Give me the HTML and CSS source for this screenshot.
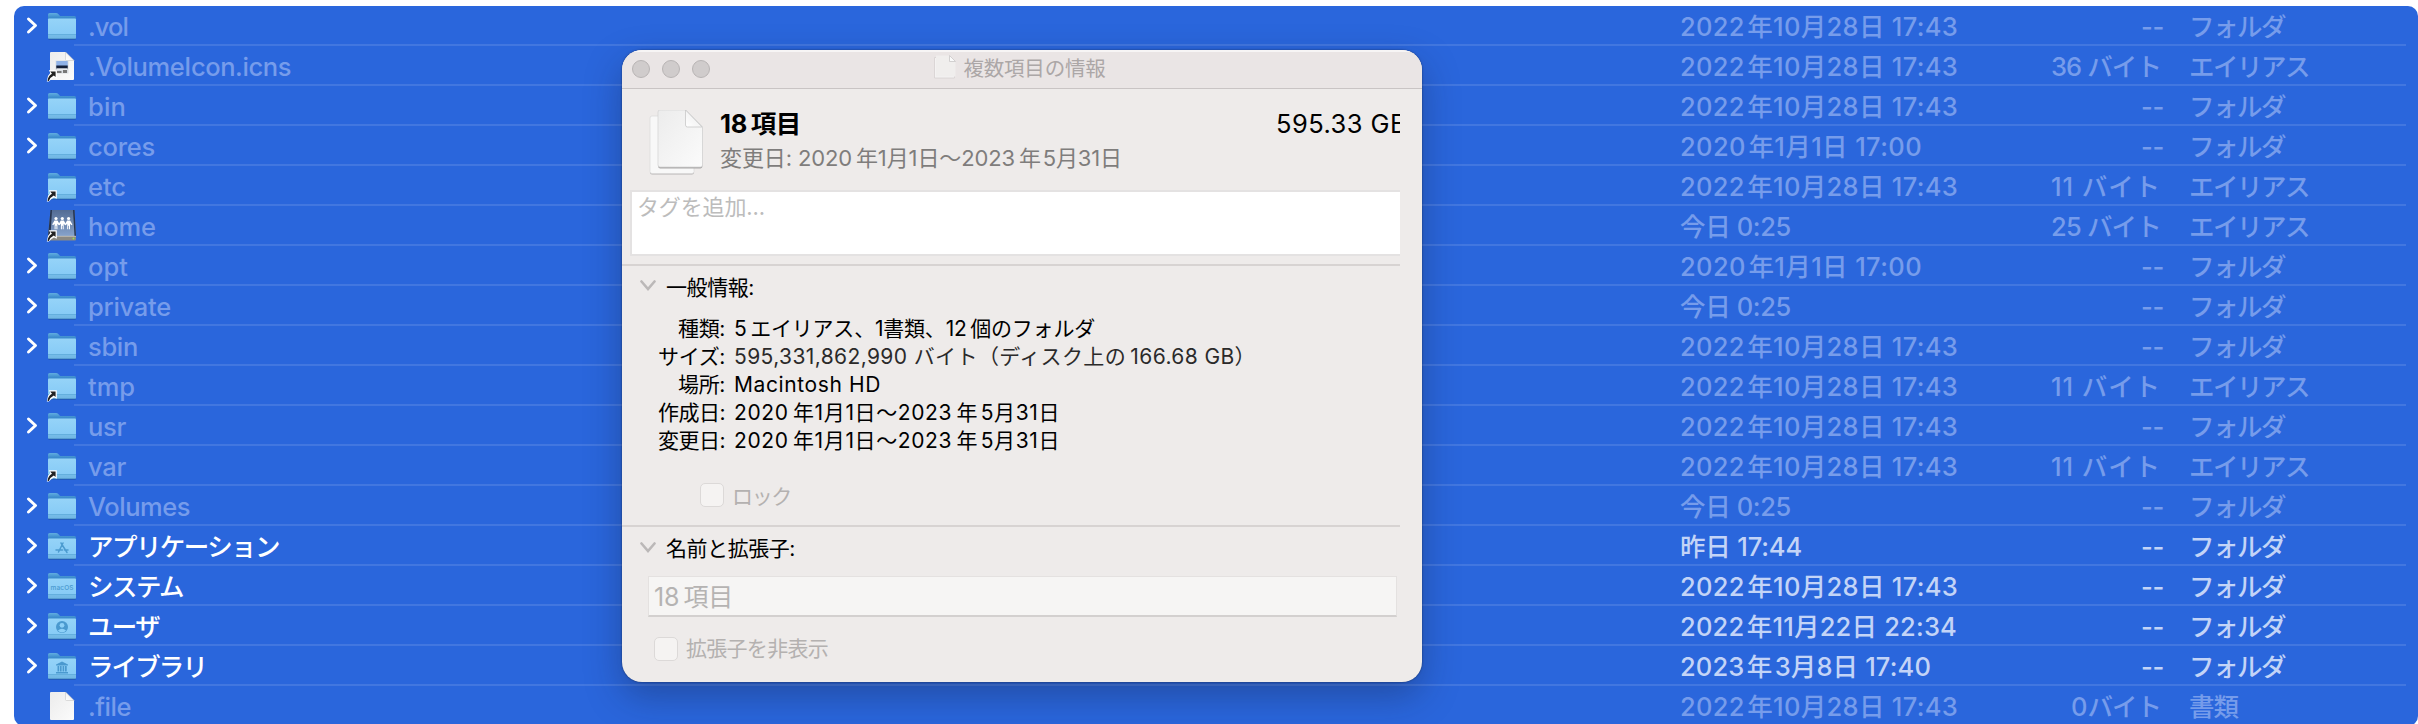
FILE: index.html
```html
<!DOCTYPE html>
<html lang="ja">
<head>
<meta charset="utf-8">
<title>複数項目の情報</title>
<link rel="stylesheet" href="styles.css">
</head>
<body>
<svg class="defs" width="0" height="0">
  <defs>
    <linearGradient id="gBack" x1="0" y1="0" x2="0" y2="1"><stop offset="0" stop-color="#62ade0"/><stop offset=".25" stop-color="#3d8ccd"/><stop offset="1" stop-color="#3d8ccd"/></linearGradient>
    <linearGradient id="gFront" x1="0" y1="0" x2="0" y2="1"><stop offset="0" stop-color="#95d3f8"/><stop offset=".78" stop-color="#87cbf6"/><stop offset=".8" stop-color="#76bce8"/><stop offset="1" stop-color="#70b6e3"/></linearGradient>
    <linearGradient id="gDoc" x1="0" y1="0" x2="1" y2="1"><stop offset="0" stop-color="#ececec"/><stop offset="1" stop-color="#fbfbfb"/></linearGradient>
    <linearGradient id="gFold" x1="0" y1="1" x2="1" y2="0"><stop offset="0" stop-color="#fff"/><stop offset=".5" stop-color="#f4f4f4"/><stop offset="1" stop-color="#d4d4d4"/></linearGradient>
    <linearGradient id="gDrive" x1="0" y1="0" x2="0" y2="1"><stop offset="0" stop-color="#536c94"/><stop offset="1" stop-color="#86a2cb"/></linearGradient>
    <symbol id="folder" viewBox="0 0 32 32">
      <rect x="2.2" y="9" width="27.8" height="21" rx="1.6" fill="#174a9f" opacity=".55"/>
      <path d="M2 4.6Q2 3 3.6 3H10q1.300 0 2.300 1l1.300 1.400q.6.600 1.600.600H28.400Q30 6 30 7.600V20H2z" fill="url(#gBack)"/>
      <path d="M2 9.600Q2 8.600 3 8.600H29q1 0 1 1V27.500Q30 29 28.500 29H3.500Q2 29 2 27.500z" fill="url(#gFront)"/>
      <path d="M2 24.500H30" stroke="#5ca7d8" stroke-width=".8"/>
      <path d="M2.800 28.600H29.200" stroke="#4f94c6" stroke-width=".8"/>
    </symbol>
    <symbol id="alias" viewBox="0 0 32 32">
      <path d="M.8 31.600 2 26 4.400 22.800 2.800 20.200H10.800V28.800L8 27.400 5.500 29 2.800 31.600z" fill="#fff"/>
      <path d="M1.600 31Q1.800 26.200 6 23.800L4.200 21.400H9.600V27L7.800 25.600Q3.800 27.600 2.800 31z" fill="#222"/>
    </symbol>
    <symbol id="doc" viewBox="0 0 32 32">
      <path d="M4 3Q4 2 5 2H19.500L28 10.500V29Q28 30 27 30H5Q4 30 4 29z" fill="url(#gDoc)"/>
      <path d="M19.500 2V9.500Q19.500 10.500 20.500 10.500H28z" fill="url(#gFold)" stroke="#bdbdbd" stroke-width=".5"/>
    </symbol>
  </defs>
</svg>

<main class="list" id="list"></main>

<section class="dialog">
  <header class="titlebar">
    <div class="lights"><i></i><i></i><i></i></div>
    <div class="title">
      <svg width="26" height="26" viewBox="0 0 26 26"><path d="M2.500 3.500H17L22.500 10V24H2.500z" fill="#f4f2f2" stroke="#d5d1d1" stroke-width=".8"/><path d="M4 1.500H17.500L23.500 7.500V22.500H4z" fill="#f0eeed"/><path d="M17.500 1.500V7.500H23.500z" fill="#fafafa" stroke="#c9c6c6" stroke-width=".8"/></svg>
      <span class="t" data-w="142">複数項目の情報</span>
    </div>
  </header>
  <div class="content">
    <div class="summary">
      <svg class="docs" width="58" height="68" viewBox="0 0 58 68">
        <path d="M3 9Q3 7 5 7H30L47 24V62.500Q47 64.500 45 64.500H5Q3 64.500 3 62.500z" fill="#b5b3b3"/>
        <path d="M3 8Q3 6 5 6H30L47 23V61.500Q47 63.500 45 63.500H5Q3 63.500 3 61.500z" fill="#f8f8f8" stroke="#dadada" stroke-width=".7"/>
        <path d="M11 3Q11 1 13 1H39L55.500 17.500V56Q55.500 58.400 53.500 58.400H13Q11 58.400 11 56z" fill="#aaa8a8"/>
        <path d="M11 2Q11 0 13 0H39L55.500 16.500V55Q55.500 57 53.500 57H13Q11 57 11 55z" fill="url(#gDoc)" stroke="#d2d2d2" stroke-width=".7"/>
        <path d="M38.500 0V15Q38.500 17 40.500 17H55z" fill="url(#gFold)" stroke="#c8c8c8" stroke-width=".8"/>
      </svg>
      <div class="heads">
        <div class="head"><b class="t" data-w="81">18&#x2009;項目</b><span class="total"><span class="t" data-w="131">595.33 GB</span></span></div>
        <div class="sub"><span class="t" data-w="402">変更日: 2020&#x2009;年1月1日〜2023&#x2009;年&#x200A;5月31日</span></div>
      </div>
    </div>
    <div class="tags"><span class="t" data-w="128">タグを追加...</span></div>
    <div class="section first">
      <svg class="disc" width="16" height="11" viewBox="0 0 16 11"><path d="M1.500 1.500 8 9 14.500 1.500" /></svg>
      <span class="t" data-w="88">一般情報:</span>
    </div>
    <div class="info">
      <span class="k"><span class="t" data-w="47">種類:</span></span><span><span class="t" data-w="361">5&#x2009;エイリアス、1書類、12&#x2009;個のフォルダ</span></span>
      <span class="k"><span class="t" data-w="67">サイズ:</span></span><span class="soft"><span class="t" data-w="522">595,331,862,990 バイト（ディスク上の&#x2009;166.68 GB）</span></span>
      <span class="k"><span class="t" data-w="47">場所:</span></span><span><span class="t" data-w="147">Macintosh HD</span></span>
      <span class="k"><span class="t" data-w="67">作成日:</span></span><span><span class="t" data-w="326">2020&#x2009;年1月1日〜2023&#x2009;年&#x200A;5月31日</span></span>
      <span class="k"><span class="t" data-w="67">変更日:</span></span><span><span class="t" data-w="326">2020&#x2009;年1月1日〜2023&#x2009;年&#x200A;5月31日</span></span>
    </div>
    <div class="check lock"><i></i><span class="t" data-w="59">ロック</span></div>
    <div class="section second">
      <svg class="disc" width="16" height="11" viewBox="0 0 16 11"><path d="M1.500 1.500 8 9 14.500 1.500" /></svg>
      <span class="t" data-w="129">名前と拡張子:</span>
    </div>
    <div class="field"><span class="t" data-w="79">18&#x2009;項目</span></div>
    <div class="check hide"><i></i><span class="t" data-w="142">拡張子を非表示</span></div>
  </div>
</section>
<script src="list.js"></script>
</body>
</html>
```

FILE: styles.css
```css
* { box-sizing: border-box; }
body {
  margin: 0;
  width: 2418px;
  height: 724px;
  overflow: hidden;
  background: #fff;
  font-family: Inter, "Noto Sans CJK JP", sans-serif;
  position: relative;
}
.defs { position: absolute; }
.t { display: inline-block; white-space: pre; }

.list {
  margin: 6px 0 0 14px;
  width: 2404px;
  height: 720px;
  border-radius: 10px;
  background: #2a66dc;
  overflow: hidden;
  font-size: 25.500px;
  font-weight: 450;
}
.row {
  height: 40px;
  display: grid;
  grid-template-columns: 12px 20px 42px 1591px 310px 188px 1fr;
  align-items: center;
  color: #769ceb;
  line-height: 41px;
  background: linear-gradient(#4277e0, #4277e0) 60px 100% / 2332px 2px no-repeat;
}
.row:last-child { background: none; }
.row > * { height: 40px; white-space: nowrap; }
.row .arrow { grid-column: 2; }
.row .icon { grid-column: 3; padding: 4px 0 0 0; }
.row .icon svg { display: block; }
.row .date { padding-left: 1px; }
.row .size { text-align: right; }
.row .kind { padding-left: 12px; }
.row.bright { color: #c3d4f7; }
.row.bright .name { color: #fff; }
.arrow svg { display: block; margin-top: 10px; }
.arrow path { fill: none; stroke: #fff; stroke-width: 3; stroke-linecap: round; stroke-linejoin: round; }

.dialog {
  position: absolute;
  left: 622px;
  top: 50px;
  width: 800px;
  height: 632px;
  border-radius: 20px;
  background: #eeebea;
  overflow: hidden;
  box-shadow: 0 0 2px rgba(0,0,0,.5), 0 14px 36px rgba(20,30,60,.34);
}
.titlebar {
  height: 39px;
  background: #eae5e5;
  border-top: 2px solid #f7f5f5;
  border-bottom: 1px solid #c9c4c4;
  display: grid;
  grid-template-columns: 1fr auto 1fr;
  color: #aca7a7;
  font-size: 20.500px;
}
.lights { display: flex; gap: 12px; padding: 8px 0 0 10px; }
.lights i { width: 18px; height: 18px; border-radius: 50%; background: #d0cccc; border: 1px solid #b8b4b4; }
.title { display: flex; gap: 6px; line-height: 33px; padding-right: 7px; }
.title svg { margin-top: 2px; }
.content { width: 778px; overflow: hidden; color: #000; font-size: 21px; }
.summary { display: flex; height: 101px; padding: 21px 0 0 25px; }
.heads { margin-left: 15px; flex: 1; }
.head { display: flex; justify-content: space-between; height: 34px; line-height: 27px; font-size: 25.500px; }
.total { width: 124px; overflow: hidden; white-space: nowrap; height: 30px; }
.sub { color: #7f7d7c; font-size: 22px; line-height: 28px; }
.tags {
  height: 66px;
  margin-left: 8px;
  border: 2px solid #e4e2e2;
  border-right: 0;
  background: #fff;
  color: #bcbcbc;
  font-size: 22px;
  line-height: 30px;
  padding-left: 5px;
}
.section { border-top: 2px solid #d7d3d2; display: flex; align-items: center; gap: 10px; padding-left: 18px; }
.section.first { margin-top: 8px; height: 41px; }
.disc { fill: none; stroke: #bbb8b8; stroke-width: 2.600; stroke-linecap: round; }
.info {
  display: grid;
  grid-template-columns: 103px 1fr;
  column-gap: 9px;
  grid-auto-rows: 28px;
  line-height: 28px;
  margin-top: 10px;
}
.info .k { text-align: right; }
.info > span { white-space: nowrap; }
.info .soft { color: #2b2a2a; }
.check { display: flex; align-items: center; height: 24px; color: #b4b1b0; gap: 8px; }
.check i { width: 24px; height: 24px; border-radius: 5px; border: 1px solid #dcd9d8; background: #f5f3f2; }
.lock { margin: 28px 0 0 78px; }
.section.second { margin-top: 18px; height: 42px; }
.field {
  margin: 9px 3px 0 26px;
  height: 41px;
  background: #f6f5f4;
  border: 1px solid #e4e1e0;
  border-bottom: 2px solid #d3d0cf;
  color: #b5b3b2;
  font-size: 25px;
  line-height: 40px;
  padding-left: 5px;
}
.hide { margin: 20px 0 0 32px; overflow: visible; line-height: 32px; }
```

FILE: list.js
```js
// name, width of name, arrow, icon kind, date, date width, size, size width, kind, kind width, bright
const D = "2022\u200A年10月28日 17:43";
const F = ["--", 23, "フォルダ", 96];
const A = (s) => [s, 110, "エイリアス", 120];
const rows = [
  [".vol", 40, 1, "", D, 278, ...F],
  [".VolumeIcon.icns", 203, 0, "icns", D, 278, ...A("36 バイト")],
  ["bin", 38, 1, "", D, 278, ...F],
  ["cores", 67, 1, "", "2020\u200A年1月1日 17:00", 242, ...F],
  ["etc", 38, 0, "link", D, 278, ...A("11 バイト")],
  ["home", 68, 0, "home", "今日 0:25", 111, ...A("25 バイト")],
  ["opt", 40, 1, "", "2020\u200A年1月1日 17:00", 242, ...F],
  ["private", 83, 1, "", "今日 0:25", 111, ...F],
  ["sbin", 50, 1, "", D, 278, ...F],
  ["tmp", 47, 0, "link", D, 278, ...A("11 バイト")],
  ["usr", 38, 1, "", D, 278, ...F],
  ["var", 38, 0, "link", D, 278, ...A("11 バイト")],
  ["Volumes", 102, 1, "", "今日 0:25", 111, ...F],
  ["アプリケーション", 191, 1, "apps", "昨日 17:44", 122, ...F, 1],
  ["システム", 95, 1, "mac", D, 278, ...F, 1],
  ["ユーザ", 71, 1, "user", "2022\u200A年11月22日 22:34", 277, ...F, 1],
  ["ライブラリ", 118, 1, "lib", "2023\u200A年\u200A3月8日 17:40", 251, ...F, 1],
  [".file", 43, 0, "doc", D, 278, "0\u200Aバイト", 90, "書類", 49],
];
const use = (id) => `<use href="#${id}" width="32" height="32"/>`;
const person = (x) => `<circle cx="${x}" cy="8.500" r="1.600"/><path d="M${x - 1.500} 10.500h3l2.300 4-.9.800-1.500-1.600v5.500h-1v-3.500h-.8v3.500h-1v-5.500l-1.500 1.600-.9-.8z"/>`;
const icons = {
  "": use("folder"),
  link: use("folder") + use("alias"),
  doc: use("doc"),
  icns: use("doc") +
    '<rect x="9.500" y="10.500" width="13" height="13" fill="#d9dde2"/><rect x="10.300" y="11" width="11.400" height="6" fill="#8fb2e8"/><rect x="10.300" y="15.500" width="11.400" height="3" fill="#14203a"/><path d="M11 21h4.500v2H11zM17 20h4v3h-4z" fill="#777"/><path d="M11 19h10" stroke="#fff" stroke-width=".8"/>' + use("alias"),
  home: '<path d="M4.500 0H28.500L30 26H2z" fill="url(#gDrive)"/><path d="M4.500 0 2 26H4.500L6 0zM28.500 0 30 26H28.500L27 0z" fill="#26344f"/><path d="M2 26H30V29.500Q30 30.500 29 30.500H3Q2 30.500 2 29.500z" fill="#8b8983"/><path d="M2 26.300H30" stroke="#c9c8c0" stroke-width=".8"/><circle cx="27.500" cy="28.500" r=".9" fill="#9be04c"/><g fill="#fff">' +
    person(10) + person(16.300) + person(22.600) + "</g>" + use("alias"),
  apps: use("folder") + '<path d="M17 13 12.500 22M15 13l6 9.500M10 20h6.500M18.500 20H22" fill="none" stroke="#4c9bd0" stroke-width="1.500" stroke-linecap="round"/>',
  mac: use("folder") + '<text x="16" y="19.500" font-size="6.500" font-weight="500" text-anchor="middle" fill="#4a99cf" textLength="23">macOS</text>',
  user: use("folder") + '<circle cx="16" cy="17" r="6" fill="#4a99cf"/><circle cx="16" cy="15.300" r="2.400" fill="#8ccff7"/><path d="M11.800 20.800Q16 16.500 20.200 20.800 16 24 11.800 20.800z" fill="#8ccff7"/>',
  lib: use("folder") + '<path d="M10 14.500 16 11.500 22 14.500V15.500H10zM11.500 16h1.700v5.500h-1.700zM14 16h1.600v5.500H14zM16.600 16h1.600v5.500h-1.600zM19 16h1.700v5.500H19zM10 22H22V23.500H10z" fill="#4a99cf"/>',
};
const text = (s, w) => `<span class="t" data-w="${w}">${s}</span>`;
document.getElementById("list").innerHTML = rows.map(([n, nw, arrow, icon, d, dw, s, sw, k, kw, bright]) => `
<div class="row${bright ? " bright" : ""}">
  <div class="arrow">${arrow ? '<svg width="12" height="20" viewBox="0 0 12 20"><path d="M2.500 3 9.500 9.500 2.500 16"/></svg>' : ""}</div>
  <div class="icon"><svg width="32" height="32" viewBox="0 0 32 32">${icons[icon]}</svg></div>
  <div class="name">${text(n, nw)}</div>
  <div class="date">${text(d, dw)}</div>
  <div class="size" style="padding-right:${s === "--" ? 13 : 16}px">${text(s, sw)}</div>
  <div class="kind">${text(k, kw)}</div>
</div>`).join("");

// Spread the characters of each label over its set width.
document.querySelectorAll(".t").forEach((el) => {
  const gap = (el.dataset.w - el.getBoundingClientRect().width) / el.textContent.length;
  el.style.letterSpacing = gap + "px";
});
```
